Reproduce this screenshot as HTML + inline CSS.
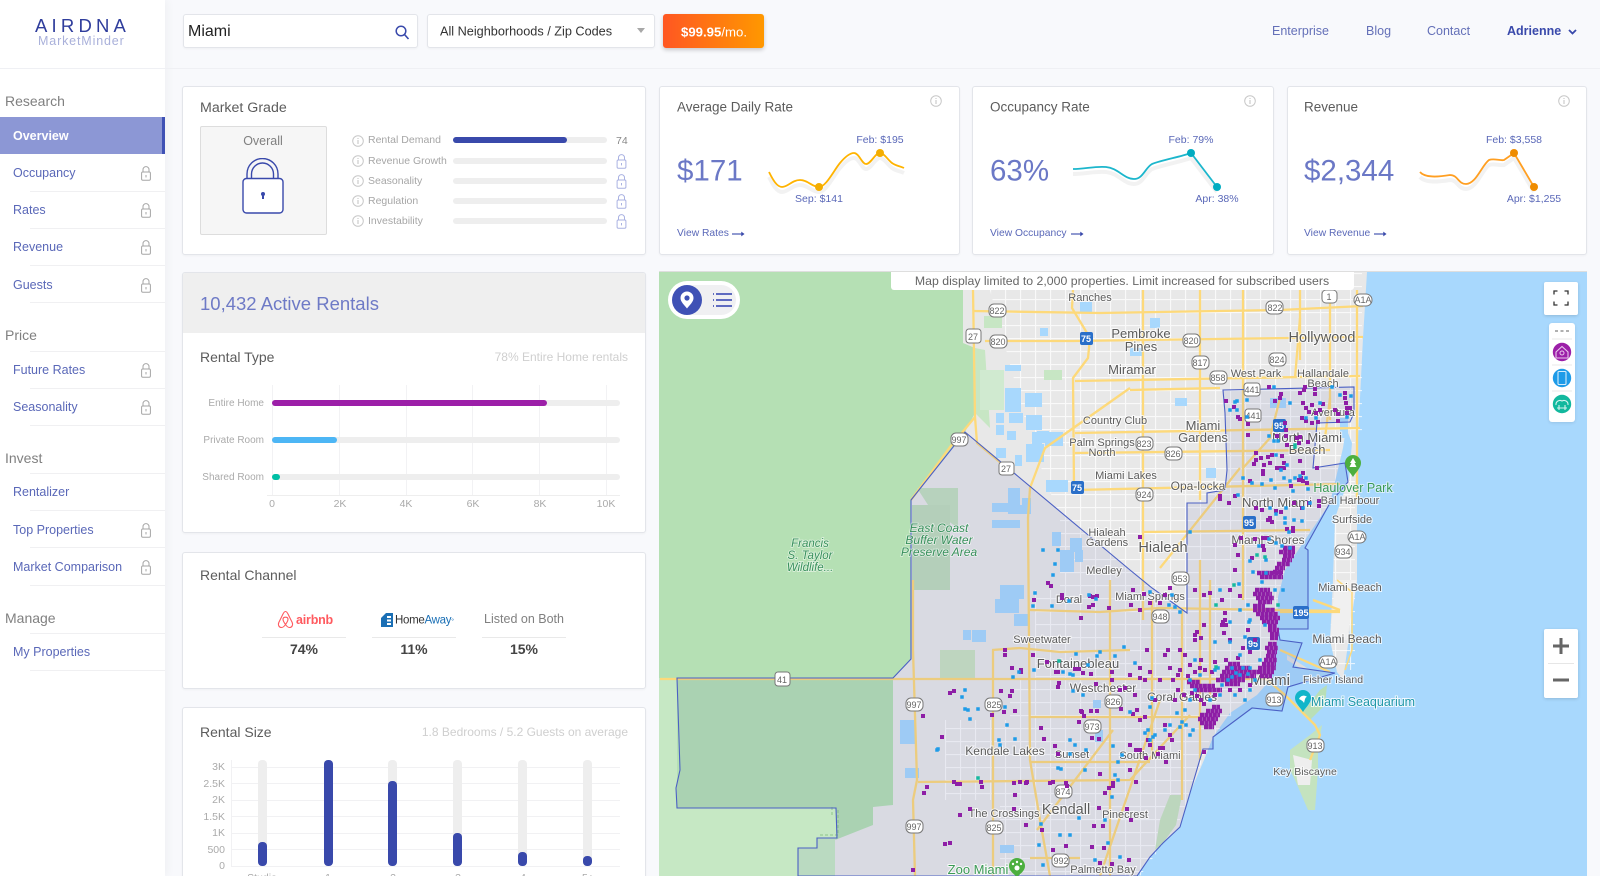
<!DOCTYPE html>
<html><head><meta charset="utf-8"><title>AirDNA MarketMinder</title>
<style>
html,body{margin:0;padding:0;width:1600px;height:876px;overflow:hidden;background:#f8f9fc;font-family:"Liberation Sans",sans-serif;}
#w{position:relative;width:1600px;height:876px;overflow:hidden;}
.t{position:absolute;line-height:1;white-space:nowrap;transform:translateY(-50%);}
.a{position:absolute;box-sizing:border-box;}
.card{position:absolute;box-sizing:border-box;background:#fff;border:1px solid #e3e5ea;border-radius:3px;box-shadow:0 1px 2px rgba(0,0,0,.04);}
.side{color:#5a68b8;font-size:12.5px;left:13px;}
.sec{color:#808080;font-size:14px;left:5px;}
.hr{position:absolute;left:30px;width:135px;height:1px;background:#f0f0f2;}
.ttl{color:#5c5c5c;font-size:14px;}
.kt{color:#5c5c5c;font-size:13.5px;}
.big{color:#6b78c6;font-size:29.5px;}
.lnk{color:#5a68b8;font-size:10.3px;}
.sp{color:#5a68b8;font-size:10.5px;text-align:center;width:80px;margin-left:-40px;}
.lb{color:#a6a6a6;font-size:10.5px;left:368px;}
.trk{position:absolute;background:#eeeeee;border-radius:4px;}
.ax{color:#aaa;font-size:10.5px;}
.rl{color:#aaa;font-size:10px;width:70px;text-align:right;left:194px;}
.c{text-align:center;transform:translate(-50%,-50%);}
svg{position:absolute;display:block;overflow:hidden;}
</style></head><body><div id="w">
<svg width="0" height="0" style="position:absolute"><defs>
<symbol id="lk" viewBox="0 0 10 15"><path d="M2 6V3.6a3 3 0 0 1 6 0V6" fill="none" stroke="currentColor" stroke-width="1"/><rect x=".6" y="6" width="8.8" height="8.2" rx="1.2" fill="none" stroke="currentColor" stroke-width="1"/><rect x="4.5" y="9" width="1" height="2.4" fill="currentColor"/></symbol>
<symbol id="inf" viewBox="0 0 12 12"><circle cx="6" cy="6" r="5.3" fill="none" stroke="#c8c8c8" stroke-width="1"/><rect x="5.5" y="5" width="1" height="4" fill="#c0c0c0"/><rect x="5.5" y="3" width="1" height="1" fill="#c0c0c0"/></symbol>
<symbol id="arr" viewBox="0 0 14 8"><path d="M0 4H11.5" stroke="#3949ab" stroke-width="1.2"/><path d="M10 1.5L13.5 4L10 6.5Z" fill="#3949ab"/></symbol>
</defs></svg>

<!-- sidebar -->
<div class="a" style="left:0;top:0;width:165px;height:876px;background:#fff;box-shadow:3px 0 8px rgba(0,0,0,.035)"></div>
<div class="a" style="left:165px;top:68px;width:1435px;height:1px;background:#eff0f4"></div>
<div class="a" style="left:0;top:68px;width:165px;height:1px;background:#eff0f4"></div>
<div class="t" style="left:35px;top:26px;font-size:18.5px;letter-spacing:4.2px;color:#2f3d9c;font-weight:400">AIRDNA</div>
<div class="t" style="left:38px;top:41px;font-size:12.5px;letter-spacing:.85px;color:#a9b0da">MarketMinder</div>

<div class="t sec" style="top:101px">Research</div>
<div class="a" style="left:0;top:117px;width:165px;height:37px;background:#8c97d5;border-right:3px solid #3f51b5"></div>
<div class="t" style="left:13px;top:136px;font-size:12.5px;font-weight:700;color:#fff">Overview</div>
<div class="t side" style="top:173px">Occupancy</div>
<div class="t side" style="top:210px">Rates</div>
<div class="t side" style="top:247px">Revenue</div>
<div class="t side" style="top:285px">Guests</div>
<div class="hr" style="top:191px"></div><div class="hr" style="top:228px"></div><div class="hr" style="top:265px"></div><div class="hr" style="top:302px"></div>
<div class="t sec" style="top:335px">Price</div><div class="hr" style="top:351px"></div>
<div class="t side" style="top:370px">Future Rates</div><div class="hr" style="top:388px"></div>
<div class="t side" style="top:407px">Seasonality</div><div class="hr" style="top:425px"></div>
<div class="t sec" style="top:458px">Invest</div><div class="hr" style="top:473px"></div>
<div class="t side" style="top:492px">Rentalizer</div><div class="hr" style="top:510px"></div>
<div class="t side" style="top:530px">Top Properties</div><div class="hr" style="top:547px"></div>
<div class="t side" style="top:567px">Market Comparison</div><div class="hr" style="top:585px"></div>
<div class="t sec" style="top:618px">Manage</div><div class="hr" style="top:633px"></div>
<div class="t side" style="top:652px">My Properties</div><div class="hr" style="top:670px"></div>
<svg style="left:141px;top:166px;color:#a6a6a6" width="10" height="15"><use href="#lk"/></svg>
<svg style="left:141px;top:203px;color:#a6a6a6" width="10" height="15"><use href="#lk"/></svg>
<svg style="left:141px;top:240px;color:#a6a6a6" width="10" height="15"><use href="#lk"/></svg>
<svg style="left:141px;top:278px;color:#a6a6a6" width="10" height="15"><use href="#lk"/></svg>
<svg style="left:141px;top:363px;color:#a6a6a6" width="10" height="15"><use href="#lk"/></svg>
<svg style="left:141px;top:400px;color:#a6a6a6" width="10" height="15"><use href="#lk"/></svg>
<svg style="left:141px;top:523px;color:#a6a6a6" width="10" height="15"><use href="#lk"/></svg>
<svg style="left:141px;top:560px;color:#a6a6a6" width="10" height="15"><use href="#lk"/></svg>

<!-- top bar -->
<div class="card" style="left:183px;top:14px;width:235px;height:34px"></div>
<div class="t" style="left:188px;top:32px;font-size:16px;color:#222">Miami</div>
<svg style="left:394px;top:24px" width="16" height="16" viewBox="0 0 16 16"><circle cx="7" cy="7" r="4.8" fill="none" stroke="#3949ab" stroke-width="1.5"/><path d="M10.5 10.5L14.5 15" stroke="#3949ab" stroke-width="1.6"/></svg>
<div class="card" style="left:427px;top:14px;width:228px;height:34px"></div>
<div class="t" style="left:440px;top:32px;font-size:12.7px;color:#333">All Neighborhoods / Zip Codes</div>
<svg style="left:636px;top:28px" width="10" height="6"><path d="M1 0H9L5 5Z" fill="#a8a8a8"/></svg>
<div class="a" style="left:663px;top:14px;width:101px;height:34px;border-radius:3px;background:linear-gradient(90deg,#ff5722,#ff9800);box-shadow:0 2px 4px rgba(0,0,0,.2)"></div>
<div class="t c" style="left:714px;top:32px;font-size:13.2px;color:#fff"><b>$99.95</b>/mo.</div>
<div class="t" style="left:1272px;top:31px;font-size:12.5px;color:#6470b8">Enterprise</div>
<div class="t" style="left:1366px;top:31px;font-size:12.5px;color:#6470b8">Blog</div>
<div class="t" style="left:1427px;top:31px;font-size:12.5px;color:#6470b8">Contact</div>
<div class="t" style="left:1507px;top:31px;font-size:12.5px;font-weight:700;color:#3949ab">Adrienne</div>
<svg style="left:1568px;top:29px" width="9" height="6"><path d="M1 1L4.5 4.5L8 1" fill="none" stroke="#3949ab" stroke-width="1.8"/></svg>

<!-- market grade -->
<div class="card" style="left:182px;top:86px;width:464px;height:169px"></div>
<div class="t ttl" style="left:200px;top:108px;font-size:14.2px">Market Grade</div>
<div class="a" style="left:200px;top:126px;width:127px;height:109px;background:#f6f6f6;border:1px solid #ddd;border-radius:2px"></div>
<div class="t c" style="left:263px;top:141px;font-size:12.5px;color:#808080">Overall</div>
<svg style="left:241px;top:158px" width="44" height="56" viewBox="0 0 44 56"><path d="M6 21V16a15 15 0 0 1 31 0V21" fill="none" stroke="#3949ab" stroke-width="1.4"/><path d="M10.5 21V16a11 11 0 0 1 22 0V21" fill="none" stroke="#3949ab" stroke-width="1.4"/><rect x="2" y="20.5" width="40" height="34.5" rx="3.5" fill="#fff" stroke="#3949ab" stroke-width="1.4"/><circle cx="22" cy="36" r="2" fill="#3949ab"/><rect x="21" y="36" width="2" height="5" fill="#3949ab"/></svg>
<svg style="left:352px;top:135px" width="12" height="12"><use href="#inf"/></svg><div class="t lb" style="top:140px">Rental Demand</div>
<svg style="left:352px;top:155px" width="12" height="12"><use href="#inf"/></svg><div class="t lb" style="top:161px">Revenue Growth</div>
<svg style="left:352px;top:175px" width="12" height="12"><use href="#inf"/></svg><div class="t lb" style="top:181px">Seasonality</div>
<svg style="left:352px;top:195px" width="12" height="12"><use href="#inf"/></svg><div class="t lb" style="top:201px">Regulation</div>
<svg style="left:352px;top:215px" width="12" height="12"><use href="#inf"/></svg><div class="t lb" style="top:221px">Investability</div>
<div class="trk" style="left:453px;top:137px;width:154px;height:6px"></div><div class="trk" style="left:453px;top:137px;width:114px;height:6px;background:#3949ab"></div>
<div class="trk" style="left:453px;top:158px;width:154px;height:6px"></div>
<div class="trk" style="left:453px;top:178px;width:154px;height:6px"></div>
<div class="trk" style="left:453px;top:198px;width:154px;height:6px"></div>
<div class="trk" style="left:453px;top:218px;width:154px;height:6px"></div>
<div class="t" style="left:616px;top:141px;font-size:10.5px;color:#888">74</div>
<svg style="left:616px;top:154px;color:#aab2e2" width="11" height="15"><use href="#lk"/></svg>
<svg style="left:616px;top:174px;color:#aab2e2" width="11" height="15"><use href="#lk"/></svg>
<svg style="left:616px;top:194px;color:#aab2e2" width="11" height="15"><use href="#lk"/></svg>
<svg style="left:616px;top:214px;color:#aab2e2" width="11" height="15"><use href="#lk"/></svg>

<!-- KPI cards -->
<div class="card" style="left:659px;top:86px;width:301px;height:169px"></div>
<div class="card" style="left:972px;top:86px;width:302px;height:169px"></div>
<div class="card" style="left:1287px;top:86px;width:300px;height:169px"></div>
<div class="t kt" style="left:677px;top:107px">Average Daily Rate</div>
<div class="t kt" style="left:990px;top:107px">Occupancy Rate</div>
<div class="t kt" style="left:1304px;top:107px">Revenue</div>
<svg style="left:930px;top:95px" width="12" height="12"><use href="#inf"/></svg>
<svg style="left:1244px;top:95px" width="12" height="12"><use href="#inf"/></svg>
<svg style="left:1558px;top:95px" width="12" height="12"><use href="#inf"/></svg>
<div class="t big" style="left:677px;top:171px">$171</div>
<div class="t big" style="left:990px;top:171px">63%</div>
<div class="t big" style="left:1304px;top:171px">$2,344</div>
<div class="t lnk" style="left:677px;top:234px">View Rates</div><svg style="left:732px;top:230px" width="13" height="8"><use href="#arr"/></svg>
<div class="t lnk" style="left:990px;top:234px">View Occupancy</div><svg style="left:1071px;top:230px" width="13" height="8"><use href="#arr"/></svg>
<div class="t lnk" style="left:1304px;top:234px">View Revenue</div><svg style="left:1374px;top:230px" width="13" height="8"><use href="#arr"/></svg>
<svg style="left:0;top:0" width="1600" height="260" viewBox="0 0 1600 260">
<g fill="none" stroke-width="4" stroke-opacity=".05" stroke="#000" transform="translate(0,5)">
<path d="M769 172C773 180 777 187 782 187C788 187 792 180 800 180C808 180 812 187 819 187C826 187 834 170 840 163C845 157 850 153 854 153C859 153 862 164 866 164C871 164 875 153 880 153C884 153 888 160 892 163C896 166 900 166 904 168"/>
<path d="M1073 169C1085 169 1095 166 1106 167C1118 168 1124 179 1134 179C1143 179 1145 168 1152 164C1162 160 1180 157 1191 153L1217 187"/>
<path d="M1420 172C1425 178 1438 177 1450 175C1458 175 1458 184 1466 184C1476 184 1482 165 1489 160C1494 158 1500 161 1504 160L1514 153L1534 187"/>
</g>
<path fill="none" stroke="#ffb300" stroke-width="1.8" d="M769 172C773 180 777 187 782 187C788 187 792 180 800 180C808 180 812 187 819 187C826 187 834 170 840 163C845 157 850 153 854 153C859 153 862 164 866 164C871 164 875 153 880 153C884 153 888 160 892 163C896 166 900 166 904 168"/>
<circle cx="880" cy="153" r="4" fill="#f3ad00"/><circle cx="819" cy="187" r="4" fill="#f3ad00"/>
<path fill="none" stroke="#1cb6cc" stroke-width="1.8" d="M1073 169C1085 169 1095 166 1106 167C1118 168 1124 179 1134 179C1143 179 1145 168 1152 164C1162 160 1180 157 1191 153L1217 187"/>
<circle cx="1191" cy="153" r="4" fill="#00acc1"/><circle cx="1217" cy="187" r="4" fill="#00acc1"/>
<path fill="none" stroke="#ff9f22" stroke-width="1.8" d="M1420 172C1425 178 1438 177 1450 175C1458 175 1458 184 1466 184C1476 184 1482 165 1489 160C1494 158 1500 161 1504 160L1514 153L1534 187"/>
<circle cx="1514" cy="153" r="4" fill="#ef8c00"/><circle cx="1534" cy="187" r="4" fill="#ef8c00"/>
</svg>
<div class="t sp" style="left:880px;top:140px">Feb: $195</div>
<div class="t sp" style="left:819px;top:199px">Sep: $141</div>
<div class="t sp" style="left:1191px;top:140px">Feb: 79%</div>
<div class="t sp" style="left:1217px;top:199px">Apr: 38%</div>
<div class="t sp" style="left:1514px;top:140px">Feb: $3,558</div>
<div class="t sp" style="left:1534px;top:199px">Apr: $1,255</div>

<!-- active rentals -->
<div class="card" style="left:182px;top:272px;width:464px;height:261px;overflow:hidden"><div style="height:60px;background:#efefef"></div></div>
<div class="t" style="left:200px;top:304px;font-size:18.5px;color:#6e7ac6">10,432 Active Rentals</div>
<div class="t ttl" style="left:200px;top:357px">Rental Type</div>
<div class="t" style="right:972px;top:357px;font-size:12px;color:#cfcfcf">78% Entire Home rentals</div>
<svg style="left:0;top:0" width="700" height="540">
<path d="M272.500 385V495M339.500 385V495M406.500 385V495M472.500 385V495M539.500 385V495M606.500 385V495" stroke="#f2f2f4" stroke-width="1"/>
<path d="M267 495.500H620" stroke="#eeeeee" stroke-width="1"/>
</svg>
<div class="trk" style="left:272px;top:400px;width:348px;height:6px"></div><div class="trk" style="left:272px;top:400px;width:275px;height:6px;background:#9c1fa8"></div>
<div class="trk" style="left:272px;top:437px;width:348px;height:6px"></div><div class="trk" style="left:272px;top:437px;width:65px;height:6px;background:#4db6f5"></div>
<div class="trk" style="left:272px;top:474px;width:348px;height:6px"></div><div class="trk" style="left:272px;top:474px;width:8px;height:6px;background:#00bfa5"></div>
<div class="t rl" style="top:404px">Entire Home</div>
<div class="t rl" style="top:441px">Private Room</div>
<div class="t rl" style="top:478px">Shared Room</div>
<div class="t ax c" style="left:272px;top:504px">0</div><div class="t ax c" style="left:340px;top:504px">2K</div><div class="t ax c" style="left:406px;top:504px">4K</div><div class="t ax c" style="left:473px;top:504px">6K</div><div class="t ax c" style="left:540px;top:504px">8K</div><div class="t ax c" style="left:606px;top:504px">10K</div>

<!-- channel -->
<div class="card" style="left:182px;top:552px;width:464px;height:137px"></div>
<div class="t ttl" style="left:200px;top:575px">Rental Channel</div>
<svg style="left:277px;top:610px" width="17" height="19" viewBox="0 0 17 19"><path d="M8.500 1.500C7 1.500 6.500 3 5.500 5L1.800 12.500C.8 15 2 17.500 4.500 17.500C6 17.500 7.500 16 8.500 14.500C9.500 16 11 17.500 12.500 17.500C15 17.500 16.200 15 15.200 12.500L11.500 5C10.500 3 10 1.500 8.500 1.500ZM8.500 14.500C7 12.500 6 10.500 6 9.300C6 8 7 7.200 8.500 7.200C10 7.200 11 8 11 9.300C11 10.500 10 12.500 8.500 14.500Z" fill="none" stroke="#ff5a5f" stroke-width="1.1"/></svg>
<div class="t" style="left:296px;top:620px;font-size:12.5px;color:#ff5a5f;font-weight:700;letter-spacing:-.2px">airbnb</div>
<svg style="left:380px;top:612px" width="14" height="16" viewBox="0 0 14 16"><path d="M1 6L6 1H13V15H1Z" fill="#1a6fb5"/><rect x="7" y="4" width="4" height="2" fill="#fff"/><rect x="7" y="7.500" width="4" height="2" fill="#fff"/><rect x="7" y="11" width="4" height="2" fill="#fff"/></svg>
<div class="t" style="left:395px;top:621px;font-size:11.5px;letter-spacing:-.3px;color:#333">Home<span style="color:#1a6fb5">Away</span><span style="font-size:7px;color:#1a6fb5">°</span></div>
<div class="t c" style="left:524px;top:619px;font-size:12.5px;color:#808080">Listed on Both</div>
<div class="a" style="left:262px;top:637px;width:84px;height:1px;background:#e9e9e9"></div>
<div class="a" style="left:372px;top:637px;width:84px;height:1px;background:#e9e9e9"></div>
<div class="a" style="left:482px;top:637px;width:84px;height:1px;background:#e9e9e9"></div>
<div class="t c" style="left:304px;top:649px;font-size:14px;font-weight:700;color:#444">74%</div>
<div class="t c" style="left:414px;top:649px;font-size:14px;font-weight:700;color:#444">11%</div>
<div class="t c" style="left:524px;top:649px;font-size:14px;font-weight:700;color:#444">15%</div>

<!-- size -->
<div class="card" style="left:182px;top:707px;width:464px;height:180px"></div>
<div class="t ttl" style="left:200px;top:732px">Rental Size</div>
<div class="t" style="right:972px;top:732px;font-size:12px;color:#cfcfcf">1.8 Bedrooms / 5.2 Guests on average</div>
<svg style="left:0;top:740px" width="700" height="136" viewBox="0 740 700 136">
<path d="M231 767.500H620M231 783.500H620M231 800.500H620M231 816.500H620M231 833.500H620M231 849.500H620M231 866.500H620M231.500 760V866" stroke="#f1f1f3" stroke-width="1"/>
</svg>
<div class="t" style="left:196px;width:29px;text-align:right;top:767px;font-size:10.5px;color:#aaa">3K</div>
<div class="t" style="left:196px;width:29px;text-align:right;top:784px;font-size:10.5px;color:#aaa">2.5K</div>
<div class="t" style="left:196px;width:29px;text-align:right;top:800px;font-size:10.5px;color:#aaa">2K</div>
<div class="t" style="left:196px;width:29px;text-align:right;top:817px;font-size:10.5px;color:#aaa">1.5K</div>
<div class="t" style="left:196px;width:29px;text-align:right;top:833px;font-size:10.5px;color:#aaa">1K</div>
<div class="t" style="left:196px;width:29px;text-align:right;top:850px;font-size:10.5px;color:#aaa">500</div>
<div class="t" style="left:196px;width:29px;text-align:right;top:866px;font-size:10.5px;color:#aaa">0</div>
<div class="trk" style="left:258px;top:760px;width:9px;height:106px"></div><div class="trk" style="left:258px;top:842px;width:9px;height:24px;background:#3949ab"></div>
<div class="trk" style="left:324px;top:760px;width:9px;height:106px;background:#3949ab"></div>
<div class="trk" style="left:388px;top:760px;width:9px;height:106px"></div><div class="trk" style="left:388px;top:781px;width:9px;height:85px;background:#3949ab"></div>
<div class="trk" style="left:453px;top:760px;width:9px;height:106px"></div><div class="trk" style="left:453px;top:833px;width:9px;height:33px;background:#3949ab"></div>
<div class="trk" style="left:518px;top:760px;width:9px;height:106px"></div><div class="trk" style="left:518px;top:852px;width:9px;height:14px;background:#3949ab"></div>
<div class="trk" style="left:583px;top:760px;width:9px;height:106px"></div><div class="trk" style="left:583px;top:856px;width:9px;height:10px;background:#3949ab"></div>
<div class="t c ax" style="left:262px;top:878px">Studio</div><div class="t c ax" style="left:328px;top:878px">1</div><div class="t c ax" style="left:393px;top:878px">2</div><div class="t c ax" style="left:458px;top:878px">3</div><div class="t c ax" style="left:523px;top:878px">4</div><div class="t c ax" style="left:588px;top:878px">5+</div>

<!-- map -->
<svg style="left:659px;top:272px" width="928" height="604" viewBox="659 272 928 604" font-family="'Liberation Sans',sans-serif">
<defs><pattern id="st" width="15" height="13" patternUnits="userSpaceOnUse"><path d="M0 .5H15M.5 0V13" stroke="#fff" stroke-opacity=".72" stroke-width="1.200"/></pattern></defs>
<rect x="659" y="272" width="928" height="604" fill="#a8d8fd"/>
<rect x="659" y="272" width="321" height="604" fill="#b5e0b4"/>
<path d="M659 678H677V876H659ZM677 808H836V876H677Z" fill="#c6e8c4"/>
<path d="M963 290V343L975 348V413L965 432L911 500V659L893 679V805L873 807V825L835 840V876H1137L1150 857L1163 843L1180 827L1190 793L1204 760L1213 737L1230 713L1257 695L1270 680H1343L1357 580V503L1358 438L1363 338L1367 272H963Z" fill="#e8e8e8"/>
<path d="M985 272H1362V438H1355V670H1270L1210 740L1180 820L1140 876H1000V800H945V720H1010V680H1035V590H1060V518L1030 438Z" fill="url(#st)"/>
<path d="M1270 680L1277 640L1278 597L1285 570L1303 543L1330 503L1343 448L1346 428L1352 443L1349 478L1335 518L1333 580L1330 640L1337 672L1343 680Z" fill="#a8d8fd"/>
<path d="M1330 640H1347L1352 610L1357 580L1335 580Z" fill="#f0f0f0"/>
<path d="M1287 655L1310 670L1330 675L1300 668L1287 660Z" fill="#dedede"/>
<path d="M1303 712L1320 690L1327 685L1325 705L1310 720Z" fill="#b9dfb6"/>
<path d="M1290 750L1310 735L1322 725L1318 750L1318 770L1315 810L1308 810L1295 780L1290 770Z" fill="#c4e3bf"/>
<path d="M1293 755L1312 760L1310 785L1298 785Z" fill="#eeeeee"/>
<path d="M1182 795L1176 825L1163 843L1155 850L1160 820L1170 795Z" fill="#c9e4c0"/>
<!-- parks -->
<path d="M975 348L985 350L990 428L975 413Z" fill="#c7e6c4"/><path d="M980 370H1004V410H980Z" fill="#d0ead0"/>
<path d="M917 488H958V528L930 508Z" fill="#c3e0c0"/><path d="M912 505H950V590H912Z" fill="#c0dcbc"/><path d="M940 650H975V680H940Z" fill="#cbe3c2"/><path d="M984 316H1002V328H984Z" fill="#c7e6c4"/><path d="M1044 370H1062V380H1044Z" fill="#c7e6c4"/>
<!-- lakes -->
<g fill="#a8d8fd">
<rect x="1005" y="365" width="16" height="6"/><rect x="1005" y="388" width="16" height="24"/><rect x="1025" y="393" width="17" height="14"/><rect x="996" y="413" width="8" height="10"/>
<rect x="1009" y="413" width="14" height="10"/><rect x="1026" y="415" width="16" height="15"/><rect x="1032" y="432" width="10" height="12"/><rect x="996" y="425" width="8" height="10"/><rect x="1045" y="432" width="18" height="14"/>
<rect x="996" y="448" width="10" height="10"/><rect x="1037" y="431" width="12" height="12"/><rect x="1007" y="431" width="9" height="9"/><rect x="1015" y="455" width="7" height="11"/><rect x="1026" y="444" width="18" height="18"/><rect x="1046" y="480" width="22" height="12"/>
<rect x="1008" y="488" width="12" height="20"/><rect x="1022" y="498" width="9" height="16"/><rect x="992" y="503" width="16" height="9"/><rect x="992" y="520" width="28" height="8"/><rect x="1008" y="505" width="15" height="9"/><rect x="1052" y="532" width="9" height="14"/><rect x="1070" y="538" width="12" height="14"/><rect x="1060" y="550" width="14" height="22"/><rect x="1075" y="550" width="8" height="12"/>
<rect x="1000" y="585" width="24" height="14"/><rect x="995" y="599" width="24" height="14"/><rect x="1014" y="614" width="16" height="12"/><rect x="963" y="630" width="8" height="10"/><rect x="972" y="630" width="14" height="12"/><rect x="900" y="720" width="15" height="24"/><rect x="905" y="768" width="14" height="10"/><rect x="1000" y="845" width="14" height="8"/><rect x="1093" y="700" width="8" height="8"/><rect x="1095" y="730" width="8" height="12"/><rect x="1206" y="468" width="10" height="10"/><rect x="1270" y="398" width="16" height="10"/><rect x="1340" y="418" width="8" height="20"/>
<rect x="1080" y="302" width="12" height="10"/><rect x="1150" y="318" width="10" height="10"/><rect x="1040" y="328" width="8" height="8"/><rect x="1130" y="348" width="14" height="8"/><rect x="1175" y="398" width="12" height="8"/></g>
<!-- roads -->
<g fill="none" stroke="#fdd97a" stroke-width="2.300" stroke-linejoin="round">
<path d="M973 290L975 417L950 447L911 500M913 580V650L917 780L913 800L915 876M975 417L977 443L1007 468"/>
<path d="M1073 290L1072 308L1090 338L1088 358L1073 378L1074 488M1130 388L1045 448L1030 488L1028 518L1030 760L1040 820L1050 876"/>
<path d="M973 311L1100 313L1280 310L1363 306M1073 341L1363 337M1075 381L1360 376M1130 390L1220 388M1075 433L1360 428M1075 453L1330 450M1075 490L1340 484M1143 532L1310 530M985 341H1075"/>
<path d="M1143 290V620M1200 290V500M1243 290V600M1300 290V360M1330 290V420M1357 290V500M1200 560V760M1210 580V700"/>
<path d="M1030 610L1100 612L1160 608L1340 611M992 650L1020 648L1060 652L1130 650M660 679H1270M1030 717H1200M1030 762H1150M918 782L1130 780L1190 715M1030 858H1080"/>
<path d="M993 650V876M1110 580V876M1152 600V760M1182 610V800M1113 730L1037 830M1258 672L1285 695L1315 725L1320 735L1310 760M1160 700L1100 876"/>
<path d="M1313 600L1340 610M1280 612H1340M1280 650L1330 672"/>
<path d="M1280 398L1270 438L1243 468M1300 318L1295 378M1240 468L1160 568M1330 398L1325 438"/>
</g>
<path d="M1337 580L1352 592V650L1345 670" stroke="#fdd97a" stroke-width="1.500" fill="none"/>
<path d="M832 815V805M838 810V835H835M820 835H838" stroke="#8dc48a" stroke-width="1" stroke-dasharray="3 2" fill="none"/>
<!-- region -->
<path d="M965 432L1130 570L1152 588L1187 613V503H1207V493L1225 490L1227 470L1225 413L1223 390L1354 387V413L1350 422L1317 423L1313 468L1345 463L1348 482L1330 503L1305 548L1308 550V629H1278L1280 640L1302 643L1293 667L1335 673L1288 687L1282 711L1252 708L1213 737V749H1203L1190 793L1180 827L1163 843L1150 857L1137 876H798V848H817V838H837L836 808H677L676 788L680 770L677 678H893L911 659V500Z" fill="#3f4fa8" fill-opacity=".09" stroke="#4b60c4" stroke-width="1.100"/>
<!-- shields upper -->
<g transform="translate(0,-2)">
<g fill="#fff" stroke="#777" stroke-width="1">
<rect x="989" y="306" width="17" height="13" rx="5"/><rect x="1266" y="303" width="17" height="13" rx="5"/><rect x="990" y="337" width="17" height="13" rx="5"/><rect x="1183" y="336" width="17" height="13" rx="5"/><rect x="966" y="331" width="15" height="14" rx="3"/><rect x="1192" y="358" width="17" height="13" rx="5"/><rect x="1269" y="355" width="17" height="13" rx="5"/><rect x="1210" y="373" width="17" height="13" rx="5"/><rect x="1244" y="385" width="16" height="13" rx="3"/><rect x="1245" y="411" width="16" height="13" rx="3"/>
<rect x="1354" y="296" width="18" height="12" rx="6"/><rect x="1348" y="533" width="18" height="12" rx="6"/><rect x="1322" y="292" width="15" height="13" rx="4"/><rect x="951" y="435" width="17" height="13" rx="5"/><rect x="999" y="464" width="15" height="13" rx="3"/><rect x="1165" y="449" width="17" height="13" rx="5"/><rect x="1136" y="439" width="17" height="13" rx="5"/><rect x="1136" y="490" width="17" height="13" rx="5"/><rect x="1335" y="547" width="17" height="13" rx="5"/><rect x="1172" y="574" width="17" height="13" rx="5"/>
</g>
<g fill="#666" font-size="9" text-anchor="middle">
<text x="997" y="316">822</text><text x="1275" y="313">822</text><text x="998" y="347">820</text><text x="1191" y="346">820</text><text x="973" y="342">27</text><text x="1200" y="368">817</text><text x="1277" y="365">824</text><text x="1218" y="383">858</text><text x="1252" y="395">441</text><text x="1253" y="421">441</text><text x="1363" y="305">A1A</text><text x="1357" y="542">A1A</text><text x="1329" y="302">1</text><text x="959" y="445">997</text><text x="1006" y="474">27</text><text x="1173" y="459">826</text><text x="1144" y="449">823</text><text x="1144" y="500">924</text><text x="1343" y="557">934</text><text x="1180" y="584">953</text></g>
<g font-size="9" text-anchor="middle" fill="#fff" font-weight="700">
<rect x="1080" y="334" width="13" height="13" rx="2" fill="#2a6fc9"/><text x="1086" y="344">75</text><rect x="1071" y="483" width="13" height="13" rx="2" fill="#2a6fc9"/><text x="1077" y="493">75</text><rect x="1273" y="421" width="13" height="13" rx="2" fill="#2a6fc9"/><text x="1279" y="431">95</text><rect x="1243" y="518" width="13" height="13" rx="2" fill="#2a6fc9"/><text x="1249" y="528">95</text></g>
</g>
<!-- shields lower -->
<g fill="#fff" stroke="#777" stroke-width="1">
<rect x="906" y="698" width="17" height="13" rx="5"/><rect x="906" y="820" width="17" height="13" rx="5"/><rect x="775" y="672" width="15" height="14" rx="3"/>
<rect x="985" y="698" width="17" height="13" rx="5"/><rect x="986" y="821" width="17" height="13" rx="5"/><rect x="1084" y="720" width="17" height="13" rx="5"/><rect x="1105" y="695" width="17" height="13" rx="5"/><rect x="1055" y="785" width="17" height="13" rx="5"/><rect x="1052" y="854" width="17" height="13" rx="5"/><rect x="1266" y="693" width="17" height="13" rx="5"/><rect x="1307" y="739" width="17" height="13" rx="5"/><rect x="1319" y="656" width="18" height="12" rx="6"/><rect x="1152" y="610" width="17" height="13" rx="5"/>
</g>
<g fill="#666" font-size="9" text-anchor="middle">
<text x="914" y="708">997</text><text x="914" y="830">997</text><text x="782" y="683">41</text><text x="994" y="708">825</text><text x="994" y="831">825</text><text x="1092" y="730">973</text><text x="1113" y="705">826</text><text x="1063" y="795">874</text><text x="1061" y="864">992</text><text x="1274" y="703">913</text><text x="1315" y="749">913</text><text x="1328" y="665">A1A</text><text x="1160" y="620">948</text></g>
<g font-size="9" text-anchor="middle" fill="#fff" font-weight="700">
<rect x="1293" y="606" width="16" height="13" rx="2" fill="#2a6fc9"/><text x="1301" y="616">195</text><rect x="1247" y="637" width="13" height="13" rx="2" fill="#2a6fc9"/><text x="1253" y="647">95</text></g>
<!-- labels -->
<g fill="#5b5b5b" text-anchor="middle" stroke="#fff" stroke-width="2" stroke-opacity=".75" paint-order="stroke" font-size="11">
<g transform="translate(0,-2)">
<text x="1090" y="303">Ranches</text>
<text x="1141" y="340" font-size="13">Pembroke</text><text x="1141" y="353" font-size="13">Pines</text>
<text x="1322" y="344" font-size="14.500">Hollywood</text>
<text x="1132" y="376" font-size="13">Miramar</text>
<text x="1256" y="379">West Park</text><text x="1323" y="379">Hallandale</text><text x="1323" y="389">Beach</text>
<text x="1115" y="426">Country Club</text><text x="1102" y="448">Palm Springs</text><text x="1102" y="458">North</text>
<text x="1203" y="432" font-size="13">Miami</text><text x="1203" y="444" font-size="13">Gardens</text>
<text x="1126" y="481">Miami Lakes</text><text x="1198" y="492" font-size="12">Opa-locka</text>
<text x="1107" y="538">Hialeah</text><text x="1107" y="548">Gardens</text><text x="1104" y="576">Medley</text>
<text x="1163" y="554" font-size="14.500">Hialeah</text>
<text x="1307" y="444" font-size="13">North Miami</text><text x="1307" y="456" font-size="13">Beach</text>
<text x="1333" y="418">Aventura</text><text x="1277" y="509" font-size="13">North Miami</text>
<text x="1350" y="506">Bal Harbour</text><text x="1352" y="525">Surfside</text><text x="1268" y="546" font-size="12">Miami Shores</text>
</g>
<text x="1350" y="591">Miami Beach</text><text x="1347" y="643" font-size="12">Miami Beach</text><text x="1333" y="683" font-size="10.500">Fisher Island</text>
<text x="1305" y="775" font-size="10.500">Key Biscayne</text>
<text x="1182" y="701" font-size="12">Coral Gables</text><text x="1150" y="759">South Miami</text><text x="1125" y="818">Pinecrest</text>
<text x="1069" y="603">Doral</text><text x="1150" y="600">Miami Springs</text><text x="1042" y="643">Sweetwater</text>
<text x="1078" y="668" font-size="13">Fontainebleau</text><text x="1103" y="692" font-size="12">Westchester</text>
<text x="1005" y="755" font-size="12">Kendale Lakes</text><text x="1072" y="758">Sunset</text><text x="1004" y="817">The Crossings</text>
<text x="1066" y="814" font-size="14.500">Kendall</text><text x="1103" y="873">Palmetto Bay</text>
<text x="1270" y="685" font-size="15">Miami</text>
</g>
<!-- dots -->
<g fill="none" stroke-linecap="square">
<path transform="translate(0,-2)" stroke="#8e1ea6" stroke-width="4" d="M1226 403h0M1269 389h0M1281 396h0M1280 400h0M1275 403h0M1305 389h0M1304 392h0M1315 391h0M1315 396h0M1300 395h0M1345 395h0M1345 400h0M1346 405h0M1347 410h0M1347 415h0M1350 410h0M1303 405h0M1306 410h0M1309 414h0M1312 407h0M1316 415h0M1320 412h0M1323 406h0M1335 412h0M1338 416h0M1302 420h0M1306 423h0M1312 425h0M1318 424h0M1338 423h0M1234 409h0M1238 419h0M1240 421h0M1248 426h0M1248 437h0M1285 425h0M1286 432h0M1286 438h0M1277 438h0M1297 440h0M1300 439h0M1299 445h0M1287 447h0M1308 444h0M1256 455h0M1256 462h0M1254 466h0M1261 460h0M1268 459h0M1270 465h0M1272 457h0M1282 458h0M1284 465h0M1280 470h0M1277 470h0M1264 467h0M1263 473h0M1263 476h0M1284 470h0M1300 463h0M1317 470h0M1303 475h0M1301 480h0M1303 483h0M1299 482h0M1307 485h0M1291 488h0M1250 483h0M1235 498h0M1220 498h0M1220 501h0M1229 505h0M1256 510h0M1262 512h0M1276 513h0M1281 514h0M1294 505h0M1302 510h0M1309 505h0M1319 503h0M1319 508h0M1270 520h0M1272 524h0M1268 522h0M1293 530h0M1287 531h0M1293 533h0M1263 540h0M1235 547h0M1238 557h0M1241 540h0M1255 541h0M1267 540h0M1263 548h0M1264 552h0"/>
<path stroke="#8e1ea6" stroke-width="4" d="M1048 583h0M1051 586h0M1062 595h0M1062 598h0M1090 596h0M1093 597h0M1097 596h0M1089 607h0M1093 605h0M1109 608h0M1081 618h0M1034 600h0M1033 655h0M1005 650h0M1005 655h0M1021 670h0M1021 672h0M1012 668h0M1047 662h0M1056 672h0M1058 672h0M1059 683h0M1058 687h0M1075 669h0M1079 669h0M1083 673h0M1091 674h0M1096 684h0M1112 680h0M1120 690h0M1125 688h0M1112 672h0M1001 691h0M1012 691h0M1010 696h0M954 691h0M950 693h0M923 716h0M992 715h0M1004 712h0M1015 711h0M1081 711h0M1082 712h0M1084 716h0M1079 722h0M1091 711h0M1097 711h0M1121 709h0M1041 728h0M1044 739h0M1092 738h0M1055 746h0M1058 754h0M1099 739h0M942 737h0M927 787h0M924 793h0M954 782h0M957 784h0M960 784h0M981 782h0M982 787h0M1014 783h0M1015 795h0M1020 782h0M1014 809h0M970 809h0M960 815h0M1026 783h0M1027 782h0M1050 783h0M1053 782h0M1066 783h0M1067 786h0M1100 774h0M1109 788h0M1113 783h0M1113 786h0M1105 793h0M1099 808h0M1094 826h0M1103 826h0M1127 809h0M1026 825h0M1042 830h0M945 844h0M950 843h0M1053 850h0M1066 846h0M1092 847h0M1100 863h0M1112 864h0M913 870h0M1129 860h0M1104 848h0M1144 594h0M1150 603h0M1160 603h0M1140 610h0M1131 605h0M1133 590h0M1165 595h0M1170 588h0M1195 590h0M1204 595h0M1230 590h0M1240 596h0M1225 613h0M1225 620h0M1223 622h0M1204 625h0M1224 633h0M1226 625h0M1195 635h0M1201 638h0M1197 632h0M1230 640h0M1180 650h0M1195 640h0M1165 655h0M1168 650h0M1185 655h0M1147 650h0M1190 665h0M1201 660h0M1215 662h0M1140 668h0M1150 672h0M1170 668h0M1180 670h0M1195 672h0M1205 670h0M1160 680h0M1145 680h0M1130 675h0M1140 678h0M1173 680h0M1178 675h0M1230 690h0M1250 685h0M1240 690h0M1135 695h0M1137 710h0M1155 700h0M1175 700h0M1140 720h0M1145 717h0M1165 725h0M1133 714h0M1170 735h0M1172 740h0M1148 740h0M1150 745h0M1130 745h0M1160 748h0M1163 748h0M1140 750h0M1136 750h0M1158 754h0M1166 762h0M1130 770h0M1146 758h0M1136 782h0M1131 820h0M1204 752h0M1140 537h0M1222 625h0M1235 570h0M1252 558h0M1210 593h0M1222 600h0M1197 696h0M1201 700h0M1204 704h0M1192 693h0M1215 695h0M1188 676h0M1200 668h0M1212 672h0M1178 690h0M1184 695h0M1226 660h0M1238 658h0M1250 652h0M1243 648h0M1255 640h0M1248 630h0"/>
<path stroke="#8e1ea6" stroke-width="4.500" stroke-linecap="butt" stroke-dasharray="4 .3" d="M1283 548H1295M1279 552H1295M1283 556H1294M1282 560H1292M1277 564H1290M1275 568H1285M1273 572H1283M1257 573H1282M1260 577H1283M1255 590H1270M1253 594H1272M1256 598H1274M1258 602H1272M1253 606H1265M1253 610H1275M1256 614H1278M1260 618H1280M1262 622H1278M1268 626H1277M1268 630H1279M1270 634H1279M1270 638H1278M1268 644H1277M1265 648H1278M1267 652H1277M1266 656H1276M1264 660H1277M1262 664H1276M1258 668H1276M1258 672H1274M1260 676H1272M1228 664H1240M1225 668H1250M1222 672H1258M1220 676H1256M1216 680H1245M1225 684H1240M1187 682H1200M1190 686H1215M1195 690H1222M1212 707H1220M1206 711H1222M1200 715H1220M1198 719H1218M1200 723H1216M1204 727H1214"/>
<path transform="translate(0,-2)" stroke="#1e9be8" stroke-width="3.500" d="M1043 552h0M1058 552h0M1055 566h0M1053 577h0M1237 403h0M1247 402h0M1235 404h0M1230 412h0M1237 412h0M1247 419h0M1274 389h0M1290 405h0M1332 389h0M1340 397h0M1351 398h0M1320 405h0M1316 420h0M1306 420h0M1347 419h0M1269 438h0M1274 443h0M1278 443h0M1276 457h0M1281 472h0M1287 467h0M1252 485h0M1243 480h0M1238 497h0M1262 486h0M1271 482h0M1275 490h0M1284 480h0M1290 483h0M1293 493h0M1295 480h0M1300 478h0M1306 480h0M1308 491h0M1310 505h0M1303 510h0M1270 510h0M1276 516h0M1286 510h0M1285 520h0M1294 522h0M1302 523h0M1285 525h0M1289 534h0M1269 541h0M1259 548h0M1276 545h0M1282 548h0M1290 550h0M1266 562h0M1250 563h0M1190 534h0"/>
<path stroke="#1e9be8" stroke-width="3.500" d="M1035 593h0M1052 606h0M1033 606h0M1069 601h0M1089 595h0M1096 599h0M1019 672h0M1013 677h0M965 690h0M962 697h0M965 709h0M968 710h0M978 709h0M970 719h0M1007 725h0M1015 739h0M999 740h0M1000 745h0M938 749h0M937 750h0M1005 707h0M1034 670h0M1073 675h0M1088 665h0M1076 654h0M1097 656h0M1100 652h0M1115 656h0M1124 647h0M1135 663h0M1063 672h0M1070 674h0M1073 691h0M1083 695h0M1070 740h0M1075 745h0M1086 750h0M1070 754h0M1085 770h0M1058 768h0M1061 769h0M1118 762h0M1113 746h0M1122 755h0M1115 775h0M1118 780h0M1105 820h0M1079 818h0M1070 835h0M1041 824h0M1060 835h0M1112 797h0M1108 843h0M1039 845h0M1043 865h0M1095 860h0M1120 857h0M1253 572h0M1266 573h0M1262 582h0M1239 584h0M1275 590h0M1283 590h0M1150 592h0M1169 605h0M1172 595h0M1248 605h0M1240 610h0M1175 607h0M1220 590h0M1180 612h0M1230 622h0M1250 620h0M1265 625h0M1245 637h0M1230 642h0M1215 642h0M1240 655h0M1195 660h0M1190 680h0M1200 675h0M1218 668h0M1232 668h0M1240 675h0M1228 680h0M1250 668h0M1255 680h0M1250 690h0M1245 700h0M1220 695h0M1210 700h0M1235 695h0M1195 690h0M1190 700h0M1185 710h0M1182 722h0M1180 727h0M1152 698h0M1150 707h0M1177 713h0M1186 725h0M1193 730h0M1170 725h0M1165 730h0M1130 712h0M1145 733h0M1150 740h0M1155 735h0M1153 737h0M1148 730h0M1190 735h0M1249 622h0M1236 673h0M1222 685h0M1215 670h0M1243 668h0M1232 677h0M1248 674h0M1260 660h0"/>
<path stroke="#16b9a0" stroke-width="3.500" d="M1295 445h0M1295 447h0M1257 555h0M1265 557h0M1234 585h0M1216 605h0M1216 667h0M1278 605h0M978 778h0M1059 661h0"/>
</g>
<!-- green labels / pins -->
<g transform="translate(0,-2)" text-anchor="middle" font-style="italic" fill="#38905c" stroke="#fff" stroke-width="1.500" stroke-opacity=".6" paint-order="stroke" font-size="11.500">
<text x="810" y="549">Francis</text><text x="810" y="561">S. Taylor</text><text x="810" y="573">Wildlife...</text>
<text x="939" y="534" font-size="12">East Coast</text><text x="939" y="546" font-size="12">Buffer Water</text><text x="939" y="558" font-size="12">Preserve Area</text></g>
<g text-anchor="middle" stroke="#fff" stroke-width="2" stroke-opacity=".8" paint-order="stroke" font-size="12.500">
<text x="1353" y="492" fill="#3b9a55" stroke-opacity=".5">Haulover Park</text>
<text x="1363" y="706" fill="#1e97a8">Miami Seaquarium</text>
<text x="978" y="874" fill="#3b9a55" font-size="13">Zoo Miami</text></g>
<path d="M1353 455a8 8 0 0 1 8 8c0 5-5 9-8 14c-3-5-8-9-8-14a8 8 0 0 1 8-8Z" fill="#4caf3f"/><path d="M1353 458l3 5h-1.500l2 4h-7l2-4h-1.500Z" fill="#fff"/>
<path d="M1303 690a8 8 0 0 1 8 8c0 5-5 9-8 14c-3-5-8-9-8-14a8 8 0 0 1 8-8Z" fill="#12b5c9"/><path d="M1299 699c2-4 6-4 8-2c-2 0-2 3-3 6c-1-2-3-3-5-4Z" fill="#fff"/>
<path d="M1017 858a8 8 0 0 1 8 8c0 5-5 8-8 11c-3-3-8-6-8-11a8 8 0 0 1 8-8Z" fill="#4caf3f"/><circle cx="1017" cy="868" r="2.500" fill="#fff"/><circle cx="1013" cy="864" r="1.200" fill="#fff"/><circle cx="1017" cy="862" r="1.200" fill="#fff"/><circle cx="1021" cy="864" r="1.200" fill="#fff"/>
</svg>
<div class="a" style="left:659px;top:271px;width:928px;height:1px;background:#dedede"></div>
<div class="a" style="left:891px;top:272px;width:463px;height:18px;background:#fff;border-radius:0 0 3px 3px"></div>
<div class="t c" style="left:1122px;top:281px;font-size:12.3px;color:#666">Map display limited to 2,000 properties. Limit increased for subscribed users</div>
<div class="a" style="left:668px;top:281px;width:72px;height:38px;background:#fff;border-radius:19px"></div>
<div class="a" style="left:672px;top:285px;width:64px;height:30px;background:#f0f0f2;border-radius:15px"></div>
<svg style="left:672px;top:285px" width="64" height="30" viewBox="0 0 64 30"><circle cx="15" cy="15" r="15" fill="#3f51b5"/><path d="M15 6.500a6.500 6.500 0 0 1 6.500 6.500c0 4-4 7-6.500 10.500c-2.500-3.500-6.500-6.500-6.500-10.500a6.500 6.500 0 0 1 6.500-6.500Z" fill="#fff"/><circle cx="15" cy="13" r="2.600" fill="#3f51b5"/><path d="M44 9H60M44 15H60M44 21H60" stroke="#2f3fb0" stroke-width="1.500"/><path d="M41 9h1M41 15h1M41 21h1" stroke="#2f3fb0" stroke-width="1.600"/></svg>
<div class="a" style="left:1544px;top:282px;width:34px;height:33px;background:#fff;border-radius:2px;box-shadow:0 1px 3px rgba(0,0,0,.15)"></div>
<svg style="left:1553px;top:290px" width="16" height="16"><path d="M1 4.500V1H4.500M11.500 1H15V4.500M15 11.500V15H11.500M4.500 15H1V11.500" fill="none" stroke="#333" stroke-width="1.300"/></svg>
<div class="a" style="left:1549px;top:323px;width:26px;height:99px;background:#fff;border-radius:3px;box-shadow:0 1px 3px rgba(0,0,0,.1)"></div>
<svg style="left:1549px;top:323px" width="26" height="99" viewBox="0 0 26 99"><path d="M6 8h3M11.500 8h3M17 8h3" stroke="#b0b0b0" stroke-width="2"/><path d="M3 16H23M3 42H23M3 68H23" stroke="#e8e8e8"/><circle cx="13" cy="29" r="9.200" fill="#9c1fa8"/><path d="M7 29L13 23.500L19 29V35H7Z" fill="none" stroke="#e9c8ee" stroke-width="1.100"/><circle cx="13" cy="30" r="2" fill="none" stroke="#e9c8ee"/><circle cx="13" cy="55" r="9.200" fill="#1e9be8"/><rect x="9" y="48.500" width="8" height="13" rx="1" fill="none" stroke="#d4ecfb" stroke-width="1.100"/><circle cx="13" cy="81" r="9.200" fill="#12b89e"/><path d="M7 82a4 4 0 0 1 6-4a4 4 0 0 1 6 4M8 85H18M10 82V87M16 82V87" fill="none" stroke="#d5f4ef" stroke-width="1.100"/></svg>
<div class="a" style="left:1544px;top:629px;width:34px;height:69px;background:#fff;border-radius:2px;box-shadow:0 1px 3px rgba(0,0,0,.15)"></div>
<svg style="left:1544px;top:629px" width="34" height="69" viewBox="0 0 34 69"><path d="M9 17H25M17 9V25M9 51H25" stroke="#666" stroke-width="3"/><path d="M4 34.500H30" stroke="#e6e6e6"/></svg>
</div></body></html>
